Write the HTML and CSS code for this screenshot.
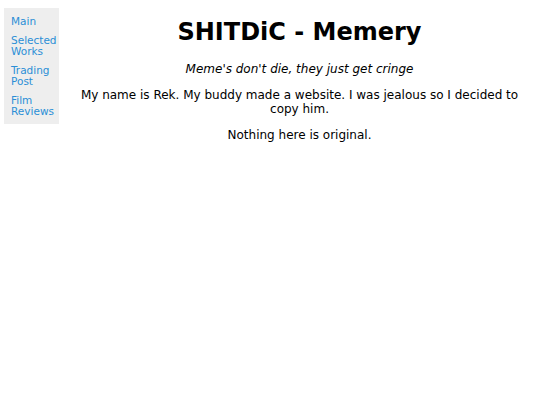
FILE: index.html
```html
<!DOCTYPE html>
<html>
<head>
<meta charset="utf-8">
<title>SHITDiC - Memery</title>
<link rel="stylesheet" href="styles.css">
</head>
<body>
<div class="page">
  <nav class="sidebar">
    <a href="#">Main</a>
    <a href="#">Selected Works</a>
    <a href="#">Trading Post</a>
    <a href="#">Film Reviews</a>
  </nav>
  <main class="content">
    <h1 class="title">SHITDiC - Memery</h1>
    <p class="tagline">Meme's don't die, they just get cringe</p>
    <p class="text">My name is Rek. My buddy made a website. I was jealous so I decided to copy him.</p>
    <p class="text">Nothing here is original.</p>
  </main>
</div>
</body>
</html>
```
FILE: styles.css
```css
html, body {
  margin: 0;
  padding: 0;
  background: #fff;
}
body {
  font-family: "DejaVu Sans", Verdana, sans-serif;
  color: #000;
}
.page {
  display: flex;
  align-items: flex-start;
  padding: 8px 0 0 4px;
}
.sidebar {
  width: 44px;
  background: #eeeeee;
  padding: 8px 4px 6px 7px;
  display: flex;
  flex-direction: column;
  gap: 7px;
}
.sidebar a {
  color: #2b8ed6;
  text-decoration: none;
  font-size: 10.5px;
  line-height: 11.5px;
}
.content {
  flex: 1;
  text-align: center;
  padding: 0 10px;
}
.title {
  font-size: 24px;
  font-weight: bold;
  margin: 10px 0 16px;
  line-height: 28px;
}
.tagline {
  font-style: italic;
  font-size: 12px;
  margin: 0 0 12px;
  line-height: 14px;
}
.text {
  font-size: 12px;
  line-height: 14px;
  margin: 0 0 12px;
}
```
